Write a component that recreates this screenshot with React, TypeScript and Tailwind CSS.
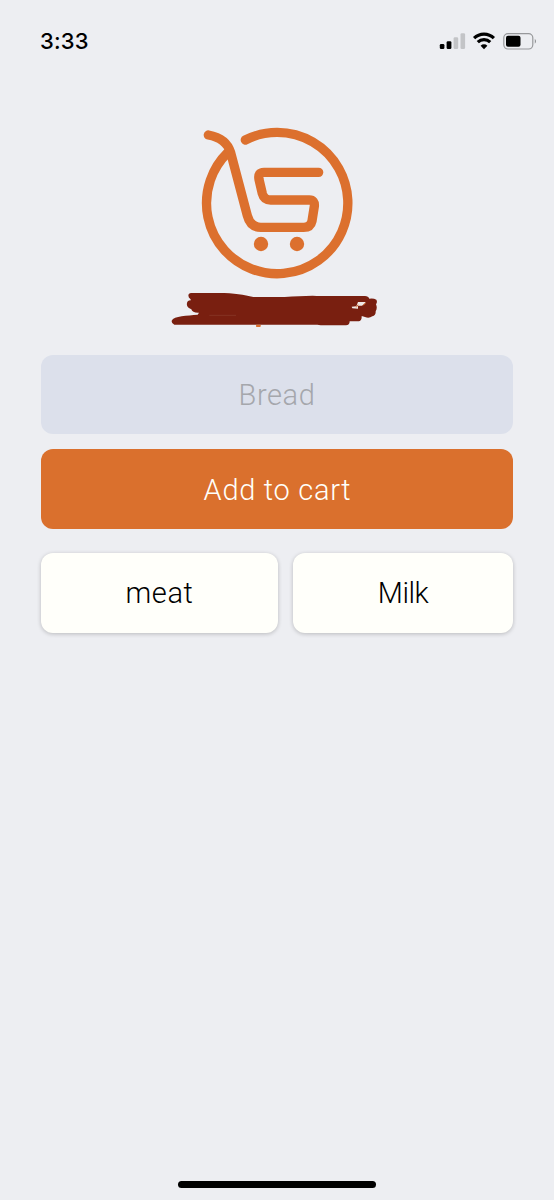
import type { ReactNode } from "react";

function StatusBar() {
  return (
    <header className="flex h-20 items-center justify-between pl-10 pr-[15px] pt-px">
      <span className="font-['Inter',sans-serif] text-[22px] font-medium leading-none tracking-[0.2px] text-black">
        3:33
      </span>
      <svg className="h-10 w-[100px]" viewBox="0 0 100 40">
        <rect x="0.8" y="23" width="4.6" height="5" rx="1.3" />
        <rect x="7.6" y="20.3" width="4.8" height="7.7" rx="1.3" />
        <rect x="14.6" y="16.3" width="4.6" height="11.7" rx="1.3" fill="#c3c4c7" />
        <rect x="21.5" y="12.3" width="4.6" height="15.7" rx="1.3" fill="#c3c4c7" />
        <g fill="none" stroke="#000" strokeWidth="3.2">
          <path d="M35.1 17.2a14.1 14.1 0 0 1 19.8 0" />
          <path d="M38.8 21.2a8.9 8.9 0 0 1 12.4 0" />
        </g>
        <path d="M45 28.2l-3.4-3.5a4.9 4.9 0 0 1 6.8 0z" />
        <rect x="64.8" y="12.6" width="29" height="15.4" rx="4.2" fill="none" stroke="#97989b" strokeWidth="1.2" />
        <rect x="67" y="14.8" width="14.5" height="11" rx="2" />
        <path d="M95.8 17.8q2.3 2.4 0 5z" fill="#85868a" />
      </svg>
    </header>
  );
}

function Logo() {
  return (
    <svg className="h-[175px] w-[175px]" viewBox="0 0 525 525">
      <g fill="none" stroke="#dc702e" strokeWidth="28" strokeLinecap="round" strokeLinejoin="round">
        <path d="M166 75A212 212 0 1 1 113 113" />
        <path d="M55 60C88 66 113 82 122 113L172 302Q181 337 213 337H341Q362 337 366 318L373 274Q375 255 358 255H242Q222 255 217 236L207 193Q203 172 222 172H386" />
      </g>
      <circle cx="213" cy="387" r="21.5" fill="#dc702e" />
      <circle cx="321" cy="387" r="21.5" fill="#dc702e" />
    </svg>
  );
}

function BrandScribble() {
  return (
    <svg className="h-[60px] w-[230px]" viewBox="0 0 690 180">
      <path
        fill="#791f10"
        d="M94 39H176C224 39 252 45 280 51H374C404 48 430 48 458 47L470 48H615Q625 48 628 56Q640 54 649 59Q653 66 648 73Q653 84 647 94Q648 105 637 109Q627 116 615 111L605 108Q606 121 597 124H569Q569 136 558 136H482L472 134H43Q34 131 35 122C42 107 82 107 113 104L117 98Q97 99 94 88Q78 82 81 69Q83 60 93 61L91 57Q83 52 86 43Q89 39 94 39Z"
      />
      <path d="M594 66H616V69L606 77H594V86L577 85L575 80L589 79Z" fill="#f0e9e7" />
      <path d="M589 82L594 74M610 76L616 69" stroke="#dc702e" strokeWidth="3" />
      <path d="M148 106H228" stroke="#8b3c2e" strokeWidth="2" />
      <rect x="288" y="134" width="14" height="7" rx="2" fill="#dc702e" />
    </svg>
  );
}

function ItemCard({ children }: { children: ReactNode }) {
  return (
    <button className="flex h-20 items-center justify-center rounded-xl bg-[#fffffa] text-black shadow-[0_1px_4px_rgba(0,0,0,0.22)]">
      {children}
    </button>
  );
}

export default function App() {
  return (
    <div className="flex h-[1200px] w-full flex-col bg-[#edeef2] font-['Roboto',sans-serif] text-[29px] font-light leading-none">
      <StatusBar />
      <main className="flex flex-1 flex-col px-[41px] pt-[35px]">
        <div className="flex flex-col items-center">
          <div className="h-[165px]">
            <Logo />
          </div>
          <div className="h-[75px] pr-1">
            <BrandScribble />
          </div>
        </div>
        <input
          type="text"
          placeholder="Bread"
          className="h-[79px] w-full rounded-xl bg-[#dce0eb] text-center tracking-[0.6px] text-black outline-none placeholder:text-[#a5a7ac]"
        />
        <button className="mt-[15px] h-20 rounded-xl bg-[#da702d] pl-px pt-0.5 tracking-[0.7px] text-[#fffffa]">
          Add to cart
        </button>
        <div className="mt-6 grid grid-cols-[237px_220px] gap-[15px]">
          <ItemCard>
            <span className="tracking-[0.6px]">meat</span>
          </ItemCard>
          <ItemCard>
            <span className="tracking-[-0.5px]">Milk</span>
          </ItemCard>
        </div>
      </main>
      <footer className="flex h-5 justify-center">
        <div className="mt-[1px] h-[7px] w-[198px] rounded-full bg-black" />
      </footer>
    </div>
  );
}
